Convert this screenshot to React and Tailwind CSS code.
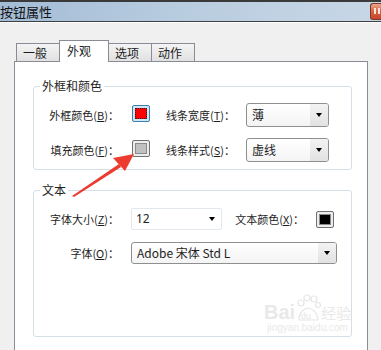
import React from "react";

const Arrow = () => (
  <div className="flex h-[4px] w-[7px] items-start justify-center">
    <div className="h-0 w-0 border-x-[3.5px] border-t-[4px] border-x-transparent border-t-black" />
  </div>
);

const Select = ({ value, width, height = "h-[24px]" }) => (
  <div
    className={`flex ${width} ${height} items-stretch overflow-hidden rounded-[3px] border border-[#8e8f8f] bg-gradient-to-b from-white to-[#f4f4f4]`}
  >
    <span className="flex flex-1 items-center pl-[5px] text-[12px] text-[#1e1e1e]">{value}</span>
    <span className="flex w-[18px] items-center justify-center bg-gradient-to-b from-[#f3f3f3] to-[#e2e2e2]">
      <Arrow />
    </span>
  </div>
);

const Swatch = ({ fill, focused }) => (
  <div
    className={`flex h-[17px] w-[18px] rounded-[2px] border p-[2px] ${
      focused ? "border-[#3c7fb1] bg-[#cfe6f5]" : "border-[#707070] bg-[#ececec]"
    }`}
  >
    <div
      className={`flex-1 border ${focused ? "border-dotted border-[#222]" : "border-[#8a8a8a]"}`}
      style={{ backgroundColor: fill }}
    />
  </div>
);

const Label = ({ children, className = "" }) => (
  <span className={`whitespace-nowrap text-[11px] text-[#1e1e1e] ${className}`}>{children}</span>
);

const Group = ({ title, children, className = "" }) => (
  <fieldset className={`w-[319px] rounded-[3px] border border-[#d5dfe5] ${className}`}>
    <legend className="ml-[6px] px-[2px] text-[12px] leading-[16px] text-[#1e1e1e]">{title}</legend>
    {children}
  </fieldset>
);

const Tab = ({ label, active }) =>
  active ? (
    <div className="relative z-10 -mb-px -ml-px h-[22px] w-[50px] border border-b-0 border-[#898c95] bg-white pl-[7px] pt-[2px] text-[12px] leading-[16px]">
      {label}
    </div>
  ) : (
    <div className="-ml-px h-[18px] w-[44px] border border-b-0 border-[#898c95] bg-gradient-to-b from-[#f4f4f4] to-[#e1e1e1] pl-[6px] pt-[2px] text-[12px] leading-[14px]">
      {label}
    </div>
  );

export default function App() {
  return (
    <div className="relative h-[350px] w-[381px] overflow-hidden bg-[#f0f0f0] font-['Noto_Sans_CJK_SC','Noto_Sans',sans-serif] text-[#1e1e1e]">
      {/* window title */}
      <div className="h-[2px] bg-[#3a3a3a]" />
      <div className="flex h-[19px] items-start justify-between bg-gradient-to-r from-[#a3bcd6] via-[#b9cde0] to-[#c8d7e6]">
        <span className="mt-[1px] text-[13px] leading-[17px] text-[#111]">按钮属性</span>
        <div className="mt-[1px] h-[17px] w-[11px] rounded-l-[3px] border border-r-0 border-[#7a3a2a] bg-gradient-to-b from-[#eba58f] via-[#d6603f] to-[#c8462c] pl-[3px] pt-[4px]">
          <div className="h-[6px] w-[6px] border-x-2 border-[#f4e4dc]" />
        </div>
      </div>
      <div className="h-px bg-[#3f3f3f]" />
      <div className="h-px bg-white" />

      {/* tabs */}
      <div className="mt-[17px] flex h-[21px] items-end pl-[17px]">
        <Tab label="一般" />
        <Tab label="外观" active />
        <Tab label="选项" />
        <Tab label="动作" />
      </div>

      {/* panel */}
      <div className="ml-[14px] h-[300px] w-[354px] border border-[#898c95] bg-white pl-[18px] pt-[16px]">
        <Group title="外框和颜色" className="pb-[7px] pt-[9px]">
          <div className="flex flex-col gap-[11px] pl-[13px]">
            <div className="flex h-[24px] items-center">
              <Label className="w-[72px] text-right">外框颜色(<u>B</u>)：</Label>
              <div className="ml-[13px] mt-[-3px]">
                <Swatch fill="#ff0000" focused />
              </div>
              <Label className="ml-[13px] w-[72px] text-right">线条宽度(<u>T</u>)：</Label>
              <div className="ml-[11px]">
                <Select value="薄" width="w-[83px]" />
              </div>
            </div>
            <div className="flex h-[24px] items-center">
              <Label className="w-[72px] text-right">填充颜色(<u>F</u>)：</Label>
              <div className="ml-[13px] mt-[-4px]">
                <Swatch fill="#c0c0c0" />
              </div>
              <Label className="ml-[13px] w-[72px] text-right">线条样式(<u>S</u>)：</Label>
              <div className="ml-[11px]">
                <Select value="虚线" width="w-[83px]" />
              </div>
            </div>
          </div>
        </Group>

        <Group title="文本" className="mt-[12px] pb-[72px] pt-[10px]">
          <div className="flex flex-col gap-[12px] pl-[13px]">
            <div className="flex h-[22px] items-center">
              <Label className="w-[72px] text-right">字体大小(<u>Z</u>)：</Label>
              <div className="ml-[12px] flex h-[22px] w-[91px] items-center rounded-[2px] border border-[#e2e8ee] bg-white pl-[4px] pr-[6px]">
                <span className="flex-1 font-['Noto_Sans',sans-serif] text-[12px]">12</span>
                <Arrow />
              </div>
              <Label className="ml-[10px] w-[72px] text-right">文本颜色(<u>X</u>)：</Label>
              <div className="ml-[12px]">
                <Swatch fill="#000000" />
              </div>
            </div>
            <div className="flex h-[22px] items-center">
              <Label className="w-[72px] text-right">字体(<u>O</u>)：</Label>
              <div className="ml-[12px]">
                <Select value="Adobe 宋体 Std L" width="w-[206px]" height="h-[22px]" />
              </div>
            </div>
          </div>
        </Group>
      </div>

      {/* red annotation arrow */}
      <svg className="pointer-events-none absolute left-0 top-0" width="381" height="350" viewBox="0 0 381 350">
        <polygon points="72,196 119,164 121,167 74,197" fill="#ec3b2f" />
        <polygon points="134,154 113,158 125,171" fill="#ec3b2f" />
      </svg>

      {/* watermark */}
      <div className="pointer-events-none absolute left-[264px] top-[294px] flex flex-col items-center text-[#e9e9e9]">
        <div className="flex items-end">
          <span className="font-['Liberation_Sans',sans-serif] text-[20px] font-bold leading-[20px]">Bai</span>
          <svg width="26" height="30" viewBox="0 0 26 30" className="-mb-[2px]">
            <g fill="none" stroke="#e6e6e6" strokeWidth="1.2">
              <circle cx="6" cy="9" r="3" />
              <circle cx="12" cy="4" r="3" />
              <circle cx="19" cy="5" r="3" />
              <circle cx="23" cy="11" r="2.5" />
              <path d="M4 26 C4 18 10 14 13 14 C17 14 23 19 23 26 Z" />
            </g>
            <text x="6" y="25" fontSize="9" fill="#e6e6e6" fontFamily="Liberation Sans, sans-serif">du</text>
          </svg>
          <span className="text-[15px] leading-[18px]">经验</span>
        </div>
        <span className="font-['Liberation_Sans',sans-serif] text-[10px] leading-[12px]">jingyan.baidu.com</span>
      </div>
    </div>
  );
}
